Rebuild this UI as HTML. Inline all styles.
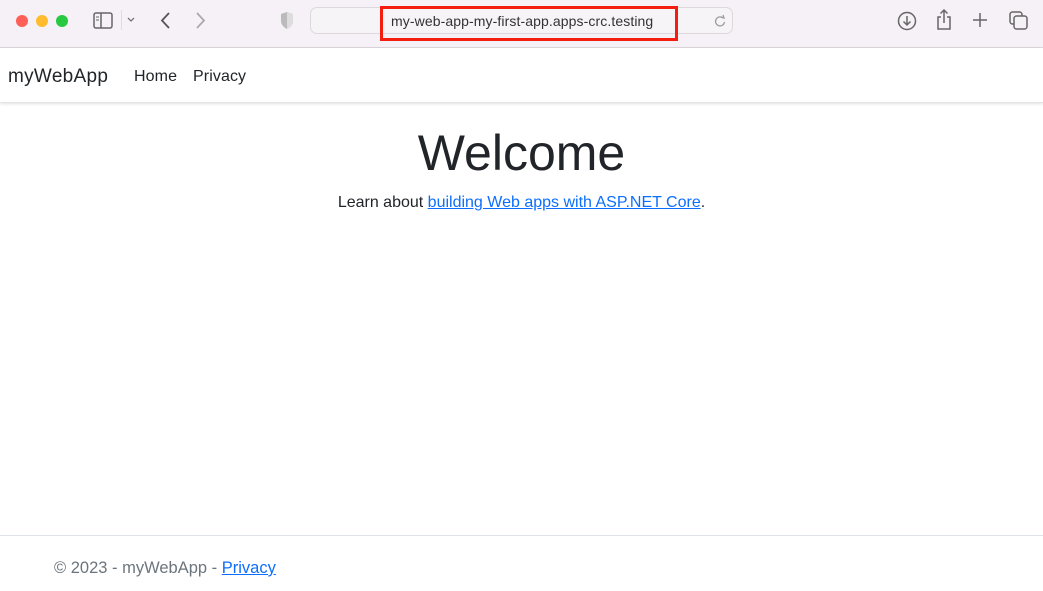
<!DOCTYPE html>
<html><head><meta charset="utf-8"><style>
*{margin:0;padding:0;box-sizing:border-box}
body{width:1043px;height:591px;overflow:hidden;background:#fff;font-family:"Liberation Sans",Arial,sans-serif;position:relative;color:#212529}
.tb{position:absolute;left:0;top:0;width:1043px;height:48px;background:#f5f1f6;border-bottom:1px solid #dcd8dc}
.dot{position:absolute;top:15px;width:12px;height:12px;border-radius:50%}
.abs{position:absolute}
.url{position:absolute;left:310px;top:7px;width:423px;height:27px;border:1px solid #dcd8dc;border-radius:7px;background:#f7f4f7}
.red{position:absolute;left:380px;top:6px;width:298px;height:35px;border:3px solid #f41e10}
.urltxt{position:absolute;left:391px;top:13px;font-size:14px;color:#333;letter-spacing:0.1px}
.nav{position:absolute;left:0;top:48px;width:1043px;height:55px;background:#fff;box-shadow:0 1px 3px rgba(0,0,0,.12);border-bottom:1px solid #e5e5e5}
.brand{position:absolute;left:8px;top:18px;font-size:19px;color:#212529;letter-spacing:0.3px}
.nl{position:absolute;top:20px;font-size:16px;color:#212529;letter-spacing:0.1px}
h1{position:absolute;left:0;width:1043px;top:124px;text-align:center;font-weight:400;font-size:50px;color:#212529}
.p{position:absolute;left:0;width:1043px;top:194px;text-align:center;font-size:16px}
a{color:#0d6efd;text-decoration:underline}
.foot{position:absolute;left:0;top:535px;width:1043px;border-top:1px solid #dee2e6;height:56px}
.ft{position:absolute;left:54px;top:559px;font-size:16.5px;color:#6c757d}
</style></head><body>
<div class="tb">
<div class="dot" style="left:16px;background:#fe5f57"></div>
<div class="dot" style="left:36px;background:#febc2e"></div>
<div class="dot" style="left:56px;background:#28c840"></div>
<svg class="abs" style="left:92px;top:11px" width="22" height="20" viewBox="0 0 22 20"><rect x="2" y="2" width="18" height="15" rx="2" fill="none" stroke="#666" stroke-width="1.5"/><line x1="9" y1="2" x2="9" y2="17" stroke="#666" stroke-width="1.5"/><line x1="4" y1="6" x2="7" y2="6" stroke="#666"/><line x1="4" y1="9" x2="7" y2="9" stroke="#666"/></svg>
<div class="abs" style="left:121px;top:10px;width:1px;height:20px;background:#ddd"></div>
<svg class="abs" style="left:126px;top:16px" width="10" height="8"><path d="M2 2 L5 5 L8 2" fill="none" stroke="#777" stroke-width="1.3"/></svg>
<svg class="abs" style="left:158px;top:11px" width="14" height="20"><path d="M11 2 L4 9.5 L11 17" fill="none" stroke="#555" stroke-width="1.8"/></svg>
<svg class="abs" style="left:194px;top:11px" width="14" height="20"><path d="M3 2 L10 9.5 L3 17" fill="none" stroke="#aaa" stroke-width="1.8"/></svg>
<svg class="abs" style="left:279px;top:11px" width="16" height="20"><path d="M8 1 L14 3 L14 10 Q14 15 8 18 Q2 15 2 10 L2 3 Z" fill="#bbb"/><path d="M8 1 L14 3 L14 10 Q14 15 8 18 Z" fill="#ddd"/></svg>
<div class="url"></div>
<svg class="abs" style="left:713px;top:14px" width="14" height="14"><path d="M10 4 A4.5 4.5 0 1 0 11.5 8" fill="none" stroke="#999" stroke-width="1.2"/><path d="M8 3 L11 4 L10 1" fill="none" stroke="#999" stroke-width="1.2"/></svg>
<div class="red"></div>
<div class="urltxt">my-web-app-my-first-app.apps-crc.testing</div>
<svg class="abs" style="left:896px;top:10px" width="22" height="22"><circle cx="11" cy="11" r="8.5" fill="none" stroke="#666" stroke-width="1.5"/><path d="M11 6 L11 15 M7.5 11.5 L11 15 L14.5 11.5" fill="none" stroke="#666" stroke-width="1.5"/></svg>
<svg class="abs" style="left:934px;top:8px" width="20" height="24"><path d="M7 9 L4 9 L4 21 L16 21 L16 9 L13 9 M10 15 L10 2 M6.5 5.5 L10 2 L13.5 5.5" fill="none" stroke="#666" stroke-width="1.5"/></svg>
<svg class="abs" style="left:971px;top:11px" width="18" height="18"><path d="M9 2 L9 16 M2 9 L16 9" stroke="#666" stroke-width="1.5"/></svg>
<svg class="abs" style="left:1008px;top:10px" width="22" height="22"><rect x="2" y="2" width="12" height="12" rx="2.5" fill="none" stroke="#666" stroke-width="1.5"/><rect x="6" y="6" width="13" height="13" rx="2.5" fill="#f5f1f6" stroke="#666" stroke-width="1.5"/></svg>
</div>
<div class="nav">
<div class="brand">myWebApp</div>
<div class="nl" style="left:134px">Home</div>
<div class="nl" style="left:193px">Privacy</div>
</div>
<h1>Welcome</h1>
<div class="p">Learn about <a>building Web apps with ASP.NET Core</a>.</div>
<div class="foot"></div>
<div class="ft">© 2023 - myWebApp - <a>Privacy</a></div>
</body></html>
